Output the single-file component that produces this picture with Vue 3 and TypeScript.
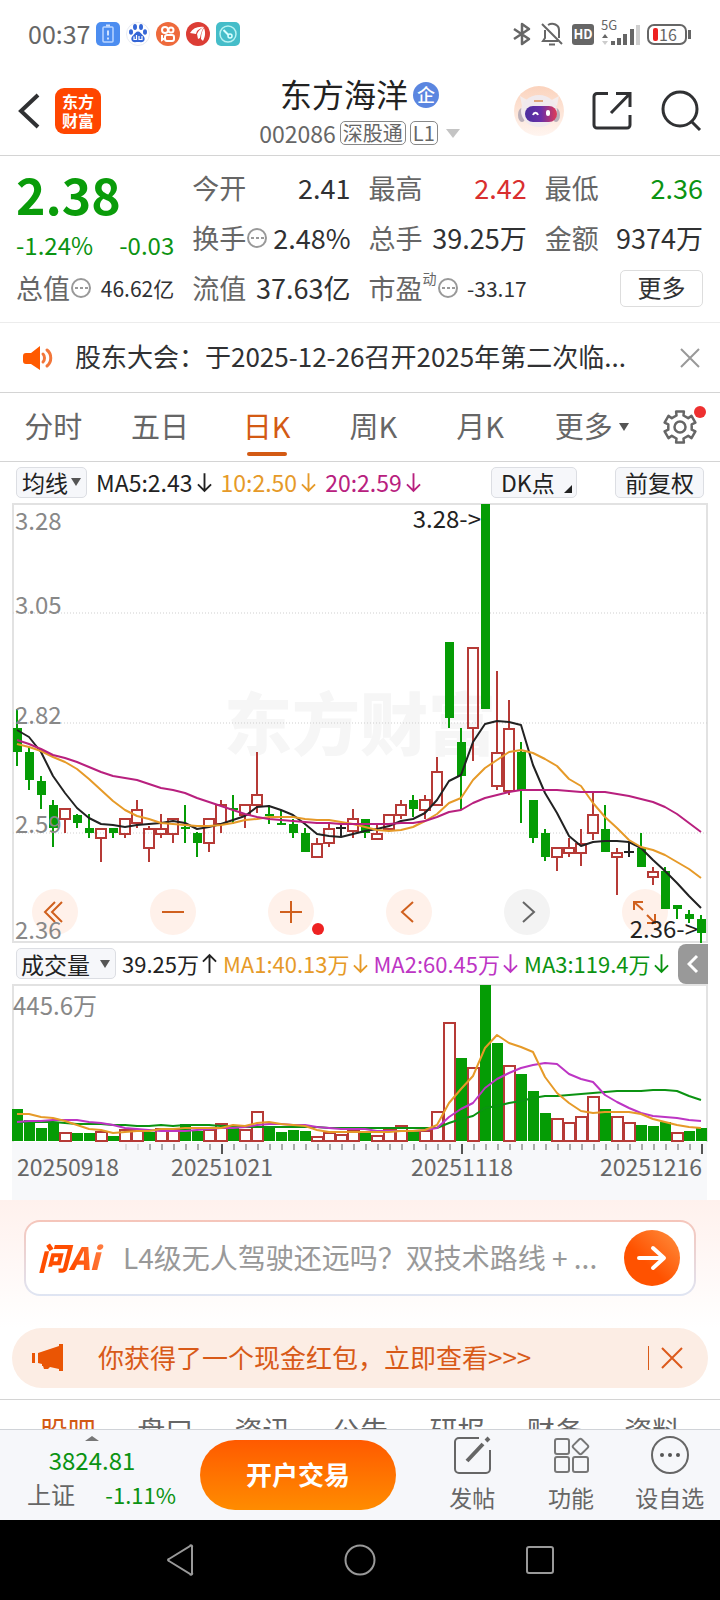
<script setup lang="ts">
import { ref } from 'vue'

type Tone = 'up' | 'down' | 'flat'

interface Candle {
  tone: Tone
  high: number
  top: number
  bottom: number
  low: number
}

const STEP = 12
const START = 17
const VOLUME_BASE = 1141

const centre = (i: number): number => START + i * STEP

// Each row: tone, high, body top, body bottom, low (chart units)
const rows: [string, number, number, number, number][] = [
  ['g', 709, 728, 752, 766], ['g', 747, 752, 780, 790], ['g', 776, 781, 795, 809],
  ['g', 800, 805, 828, 847], ['r', 808, 808, 819, 833], ['g', 814, 815, 823, 828],
  ['g', 814, 828, 833, 838], ['r', 828, 828, 838, 862], ['g', 828, 828, 833, 838],
  ['r', 818, 818, 834, 838], ['r', 800, 809, 823, 828], ['r', 826, 828, 848, 862],
  ['r', 814, 828, 834, 838], ['r', 818, 818, 834, 843], ['g', 805, 827, 829, 843],
  ['g', 832, 833, 843, 857], ['r', 818, 818, 843, 852], ['r', 800, 804, 824, 833],
  ['g', 795, 808, 810, 824], ['r', 804, 804, 815, 828], ['r', 752, 794, 805, 813],
  ['g', 805, 814, 816, 824], ['g', 810, 823, 825, 825], ['g', 819, 824, 833, 838],
  ['g', 828, 833, 852, 852], ['r', 838, 843, 857, 857], ['r', 823, 828, 843, 847],
  ['k', 823, 827, 829, 837], ['r', 809, 818, 831, 838], ['g', 819, 819, 833, 838],
  ['r', 825, 833, 839, 839], ['r', 814, 814, 829, 832], ['r', 800, 804, 815, 819],
  ['g', 795, 800, 809, 817], ['r', 795, 799, 810, 819], ['r', 757, 771, 805, 805],
  ['g', 642, 642, 718, 728], ['g', 728, 742, 776, 809], ['r', 647, 647, 728, 761],
  ['g', 504, 504, 709, 709], ['r', 671, 752, 786, 790], ['r', 700, 728, 791, 795],
  ['g', 742, 752, 790, 823], ['g', 800, 800, 838, 843], ['g', 829, 833, 857, 861],
  ['r', 847, 847, 857, 871], ['r', 838, 847, 853, 857], ['r', 829, 843, 853, 866],
  ['r', 791, 814, 833, 840], ['g', 805, 829, 852, 852], ['r', 848, 852, 857, 895],
  ['k', 843, 851, 853, 857], ['g', 833, 848, 867, 867], ['r', 867, 871, 877, 885],
  ['g', 867, 871, 909, 909], ['g', 905, 905, 909, 919], ['g', 910, 914, 919, 923],
  ['g', 915, 919, 933, 943],
]

const tones: Record<string, Tone> = { g: 'down', r: 'up', k: 'flat' }
const candles: Candle[] = rows.map(([t, high, top, bottom, low]) => ({ tone: tones[t], high, top, bottom, low }))

const ma5 = [
  730, 737, 752, 776, 793, 808, 818, 824, 825, 827, 825, 824, 823, 821, 823, 829, 827, 824, 820, 816,
  807, 806, 810, 815, 824, 834, 836, 837, 834, 831, 829, 826, 821, 819, 813, 800, 781, 775, 742, 724,
  721, 722, 725, 765, 793, 813, 836, 846, 842, 841, 841, 842, 848, 860, 871, 883, 896, 908,
]
const ma10 = [
  744, 747, 751, 757, 762, 769, 779, 790, 801, 810, 816, 819, 823, 824, 825, 826, 826, 825, 823, 820,
  819, 817, 817, 817, 819, 820, 820, 822, 824, 827, 830, 831, 830, 827, 821, 814, 803, 798, 780, 768,
  760, 752, 750, 753, 759, 766, 779, 786, 803, 817, 828, 840, 847, 850, 855, 862, 869, 878,
]
const ma20 = [
  740, 744, 749, 755, 758, 762, 767, 772, 776, 778, 780, 784, 788, 790, 793, 798, 802, 806, 810, 814,
  817, 819, 820, 821, 822, 823, 823, 824, 824, 824, 824, 824, 823, 823, 821, 817, 812, 810, 803, 798,
  795, 792, 790, 790, 790, 790, 791, 792, 792, 792, 794, 796, 799, 802, 807, 814, 823, 832,
]

const volumeTops = [
  1109, 1120, 1128, 1123, 1132, 1133, 1133, 1131, 1136, 1129, 1129, 1132, 1128, 1129, 1124, 1131, 1129, 1123, 1127, 1129,
  1111, 1127, 1132, 1130, 1131, 1136, 1132, 1134, 1130, 1132, 1135, 1129, 1125, 1131, 1130, 1111, 1022, 1058, 1067, 985,
  1043, 1065, 1074, 1091, 1113, 1118, 1122, 1116, 1096, 1109, 1116, 1122, 1125, 1126, 1122, 1132, 1131, 1128,
]
const volumeTones = 'ggggrggrgrrgrrggrrgrrggggrrrrgrrrgrrrgrggrgggrrrrgrrgggrgg'.split('').map((t) => tones[t])

const vol5 = [
  1114, 1114, 1117, 1118, 1121, 1125, 1129, 1130, 1133, 1132, 1131, 1131, 1129, 1129, 1128, 1128, 1128, 1128, 1125, 1126,
  1123, 1122, 1124, 1125, 1126, 1130, 1132, 1132, 1132, 1132, 1132, 1132, 1131, 1131, 1130, 1125, 1103, 1089, 1076, 1048,
  1035, 1043, 1047, 1052, 1077, 1093, 1103, 1111, 1113, 1112, 1112, 1112, 1114, 1119, 1122, 1125, 1127, 1128,
]
const vol10 = [
  1122, 1121, 1121, 1120, 1120, 1120, 1122, 1123, 1125, 1128, 1129, 1130, 1131, 1131, 1131, 1130, 1129, 1128, 1128, 1127,
  1125, 1124, 1124, 1125, 1125, 1127, 1128, 1129, 1129, 1129, 1131, 1131, 1131, 1131, 1130, 1128, 1117, 1109, 1103, 1088,
  1079, 1073, 1068, 1065, 1063, 1064, 1074, 1079, 1082, 1095, 1102, 1108, 1113, 1116, 1117, 1118, 1120, 1121,
]
const vol20 = [
  1122, 1122, 1122, 1122, 1123, 1124, 1124, 1124, 1125, 1125, 1126, 1126, 1125, 1126, 1125, 1125, 1125, 1126, 1126, 1127,
  1127, 1127, 1127, 1127, 1127, 1127, 1128, 1128, 1128, 1128, 1128, 1128, 1128, 1128, 1128, 1128, 1123, 1119, 1116, 1108,
  1106, 1103, 1101, 1098, 1096, 1096, 1095, 1094, 1093, 1092, 1091, 1091, 1091, 1090, 1090, 1091, 1096, 1100,
]

const polyline = (ys: number[]): string => ys.map((y, i) => `${centre(i)},${y}`).join(' ')

const ticks = Array.from({ length: 49 }, (_, i) => {
  const x = 126 + i * STEP
  return { x, major: x === 222 || x === 462 || x === 702, faint: i < 2 }
})

const gear = (() => {
  const points: string[] = []
  for (let k = 0; k < 6; k++) {
    const mid = k * 60 - 90
    const shape: [number, number][] = [[-17, 12], [-14, 16], [14, 16], [17, 12]]
    for (const [offset, radius] of shape) {
      const a = ((mid + offset) * Math.PI) / 180
      points.push(`${(18 + radius * Math.cos(a)).toFixed(1)},${(18 + radius * Math.sin(a)).toFixed(1)}`)
    }
  }
  return points.join(' ')
})()

const periods = ['分时', '五日', '日K', '周K', '月K', '更多']
const period = ref('日K')

const averages = [
  { text: 'MA5:2.43', tone: 'ink' },
  { text: '10:2.50', tone: 'amber' },
  { text: '20:2.59', tone: 'magenta' },
]
const volumeAverages = [
  { text: 'MA1:40.13万', tone: 'amber' },
  { text: 'MA2:60.45万', tone: 'violet' },
  { text: 'MA3:119.4万', tone: 'green' },
]
const sections = ['股吧', '盘口', '资讯', '公告', '研报', '财务', '资料']
const question = ref('')
</script>

<template>
  <div class="page">
    <div class="status">
      <span class="clock">00:37</span>
      <svg class="app" viewBox="0 0 24 24" aria-hidden="true">
        <rect width="24" height="24" rx="5" fill="#4c8df0" />
        <rect x="7" y="5" width="10" height="15" rx="1" fill="none" stroke="#b9d5ff" stroke-width="1.5" />
        <path d="M10 3.500h4M12 8.500v5M12 15.500v2" stroke="#cfe2ff" stroke-width="2" />
      </svg>
      <svg class="app" viewBox="0 0 24 24" aria-hidden="true">
        <circle cx="12" cy="12" r="11.500" fill="#fff" stroke="#e8ebf2" stroke-width="1" />
        <g fill="#3566d6">
          <ellipse cx="9" cy="5" rx="2" ry="3" /><ellipse cx="15" cy="5" rx="2" ry="3" />
          <ellipse cx="5" cy="10" rx="2" ry="2.800" /><ellipse cx="19" cy="10" rx="2" ry="2.800" />
          <path d="M12 9.500c2 0 3 2 4.500 3.500 2 1.800 2.500 3 2 5-1 3-4 2-6.500 2s-5.500 1-6.500-2c-.5-2 0-3.200 2-5C9 11.500 10 9.500 12 9.500z" />
        </g>
        <path d="M8 14.500v3h2.500v-4.500M13 14v3.500h3V14" fill="none" stroke="#fff" stroke-width="1.200" />
      </svg>
      <svg class="app" viewBox="0 0 24 24" aria-hidden="true">
        <circle cx="12" cy="12" r="12" fill="#ee6a3c" />
        <g fill="none" stroke="#fff" stroke-width="2">
          <circle cx="9" cy="8" r="3" /><circle cx="15" cy="8" r="2.500" />
          <rect x="9" y="13" width="9" height="6" rx="2" /><path d="M6 13v5l3-2" />
        </g>
      </svg>
      <svg class="app" viewBox="0 0 24 24" aria-hidden="true">
        <circle cx="12" cy="12" r="12" fill="#dc3d35" />
        <path d="M4 11c3-5 8-7 14-6-3 1-5 2-7 4l-1 3zM11 12c2-4 4-6 7-7-2 3-3 6-4 11l-2 1zM15 17c0-5 1-8 3-11 2 5 1 9-1 13z" fill="#fff" />
      </svg>
      <svg class="app" viewBox="0 0 24 24" aria-hidden="true">
        <rect width="24" height="24" rx="5" fill="#45bdc9" />
        <circle cx="12" cy="12" r="8" fill="none" stroke="#b9f2f2" stroke-width="1.500" />
        <circle cx="14" cy="14" r="2" fill="none" stroke="#d9ffff" stroke-width="1.500" />
        <path d="M7.500 8l5 5" stroke="#d9ffff" stroke-width="2" />
      </svg>
      <span class="grow"></span>
      <svg class="sys bt" viewBox="0 0 20 24" aria-hidden="true">
        <path d="M2 7l15 10-7 5V2l7 5L2 17" fill="none" stroke="#666" stroke-width="2.500" stroke-linejoin="round" />
      </svg>
      <svg class="sys bell" viewBox="0 0 24 24" aria-hidden="true">
        <path d="M5 8v8l-2 3h15M8 3c5-3 11 0 11 5v8M2 2l20 20" fill="none" stroke="#666" stroke-width="2" />
        <path d="M9 22.500h6" stroke="#666" stroke-width="2" />
      </svg>
      <span class="hd">HD</span>
      <span class="signal">
        <svg viewBox="0 0 40 26" aria-hidden="true">
          <path d="M4 13l3 4H1z" fill="#666" /><path d="M7 20H1l3 4z" fill="#ccc" />
          <g fill="#666"><rect x="10" y="20" width="4" height="4" /><rect x="16" y="17" width="4" height="7" /><rect x="22" y="13" width="4" height="11" /><rect x="29" y="8" width="4" height="16" /></g>
          <rect x="35" y="4" width="4" height="20" fill="#cfcfcf" />
        </svg>
        <span class="gen">5G</span>
      </span>
      <span class="battery"><i></i>16</span>
    </div>

    <header class="head">
      <div class="side">
        <button class="plain" aria-label="返回">
          <svg width="24" height="38" viewBox="0 0 24 38"><path d="M21 3L4 19l17 16" fill="none" stroke="#303133" stroke-width="4" /></svg>
        </button>
        <a class="brand" href="#"><span>东方</span><span>财富</span></a>
      </div>
      <div class="title">
        <h1>东方海洋<span class="corp">企</span></h1>
        <p>002086<span class="tag">深股通</span><span class="tag">L1</span><i class="caret pale"></i></p>
      </div>
      <div class="side tools">
        <button class="plain" aria-label="智能助手">
          <svg width="50" height="50" viewBox="0 0 50 50">
            <defs>
              <linearGradient id="halo" x1="0" y1="0" x2="0" y2="1"><stop offset="0" stop-color="#fbd3bd" /><stop offset="1" stop-color="#fff5f0" /></linearGradient>
              <linearGradient id="visor" x1="0" y1="0" x2="1" y2="0"><stop offset="0" stop-color="#4a2f9e" /><stop offset=".5" stop-color="#6a2fa8" /><stop offset="1" stop-color="#e03a55" /></linearGradient>
            </defs>
            <circle cx="25" cy="25" r="25" fill="url(#halo)" />
            <path d="M6 10l9 5-7 5zM45 10l-9 5 7 5z" fill="#f4ecec" />
            <ellipse cx="8" cy="29" rx="4" ry="7" fill="#b9aeb8" /><ellipse cx="42" cy="29" rx="4" ry="7" fill="#b9aeb8" />
            <ellipse cx="25" cy="25" rx="18" ry="16" fill="#f1eaed" />
            <path d="M20 15h9" stroke="#e0a67c" stroke-width="2" />
            <rect x="11" y="20" width="32" height="16" rx="8" fill="url(#visor)" />
            <path d="M19 29c1-3 4-3 5 0" fill="none" stroke="#fff" stroke-width="2" />
            <rect x="32" y="24" width="4" height="6" rx="2" fill="#fff" />
          </svg>
        </button>
        <button class="plain" aria-label="分享">
          <svg width="40" height="40" viewBox="0 0 40 40" fill="none" stroke="#303133" stroke-width="3">
            <path d="M16 2.500H5a3 3 0 0 0-3 3V34a3 3 0 0 0 3 3h30a3 3 0 0 0 3-3V24M24 2.500h14V16M38 2.500L19 22" />
          </svg>
        </button>
        <button class="plain" aria-label="搜索">
          <svg width="42" height="42" viewBox="0 0 42 42" fill="none" stroke="#303133" stroke-width="3">
            <circle cx="20" cy="19" r="17" /><path d="M31 31l9 9" />
          </svg>
        </button>
      </div>
    </header>

    <main class="body">
      <section class="quote">
        <div class="price">
          <strong>2.38</strong>
          <div class="change"><span>-1.24%</span><span>-0.03</span></div>
        </div>
        <div class="cell"><span class="k">今开</span><b>2.41</b></div>
        <div class="cell"><span class="k">最高</span><b class="red">2.42</b></div>
        <div class="cell"><span class="k">最低</span><b class="green">2.36</b></div>
        <div class="cell">
          <span class="k">换手<svg class="info" viewBox="0 0 20 20"><circle cx="10" cy="10" r="9" /><path d="M4 10h3M9 10h3M14 10h3" /></svg></span><b>2.48%</b>
        </div>
        <div class="cell"><span class="k">总手</span><b>39.25万</b></div>
        <div class="cell"><span class="k">金额</span><b>9374万</b></div>
        <div class="cell">
          <span class="k">总值<svg class="info" viewBox="0 0 20 20"><circle cx="10" cy="10" r="9" /><path d="M4 10h3M9 10h3M14 10h3" /></svg></span><b class="small">46.62亿</b>
        </div>
        <div class="cell"><span class="k">流值</span><b>37.63亿</b></div>
        <div class="cell">
          <span class="k">市盈<sup>动</sup><svg class="info" viewBox="0 0 20 20"><circle cx="10" cy="10" r="9" /><path d="M4 10h3M9 10h3M14 10h3" /></svg></span><b class="small">-33.17</b>
        </div>
        <div class="cell end"><button class="more">更多</button></div>
      </section>

      <section class="notice">
        <svg width="32" height="26" viewBox="0 0 32 26" aria-hidden="true">
          <path d="M4 8h5l9-7v24l-9-6H4a3 3 0 0 1-3-3v-5a3 3 0 0 1 3-3z" fill="#ff5a00" />
          <path d="M21 9c2 2 2 6 0 8M25 5c5 4 5 12 0 16" fill="none" stroke="#f2763a" stroke-width="3" stroke-linecap="round" />
        </svg>
        <a href="#">股东大会：于2025-12-26召开2025年第二次临...</a>
        <button class="plain" aria-label="关闭公告">
          <svg width="20" height="20" viewBox="0 0 20 20"><path d="M1 1l18 18M19 1L1 19" stroke="#999" stroke-width="2" /></svg>
        </button>
      </section>

      <nav class="periods">
        <button v-for="p in periods" :key="p" :class="{ on: p === period, drop: p === '更多' }" @click="period = p">
          <span>{{ p }}</span><i v-if="p === '更多'" class="caret"></i>
        </button>
        <button class="setting" aria-label="设置">
          <svg width="36" height="36" viewBox="0 0 36 36" fill="none" stroke="#666" stroke-width="2.500" stroke-linejoin="round">
            <polygon :points="gear" /><circle cx="18" cy="18" r="5.500" />
          </svg>
          <i class="dot"></i>
        </button>
      </nav>

      <div class="legend averages">
        <button class="chip">均线<i class="caret"></i></button>
        <span v-for="a in averages" :key="a.text" class="avg" :class="a.tone"><span>{{ a.text }}</span><svg class="arrow" viewBox="0 0 16 22"><path d="M8 1v19M1 13l7 7 7-7" /></svg></span>
        <span class="grow"></span>
        <button class="chip dk">DK点<i class="corner"></i></button>
        <button class="chip adjust">前复权</button>
      </div>

      <section class="chart">
        <div class="controls">
          <button aria-label="最早"><svg viewBox="0 0 46 46"><path d="M23 13L13 23l10 10M30 13L20 23l10 10" /></svg></button>
          <button aria-label="缩小"><svg viewBox="0 0 46 46"><path d="M12 23h22" /></svg></button>
          <button aria-label="放大"><svg viewBox="0 0 46 46"><path d="M12 23h22M23 12v22" /></svg><i class="dot"></i></button>
          <button aria-label="向左"><svg viewBox="0 0 46 46"><path d="M27 13L16 23l11 10" /></svg></button>
          <button class="grey" aria-label="向右"><svg viewBox="0 0 46 46"><path d="M19 13l11 10-11 10" /></svg></button>
          <button aria-label="全屏"><svg viewBox="0 0 46 46"><path d="M12 21v-8h9M12 13l9 8M25 26l8 8M33 25v9h-8" /></svg></button>
        </div>
        <svg class="plot" viewBox="12 503 696 440" role="img" aria-label="日K线图">
          <text class="watermark" x="224" y="750">东方财富</text>
          <path d="M13 943V504H707V942H13" fill="none" stroke="#e2e2e2" stroke-width="2" />
          <path d="M13 613H707M13 723H707M13 833H707" stroke="#cfcfcf" stroke-dasharray="1 2" />
          <g v-for="(c, i) in candles" :key="i" :class="c.tone">
            <path :d="`M${centre(i)} ${c.high}V${c.top}M${centre(i)} ${c.bottom}V${c.low}`" />
            <rect v-if="c.tone === 'up'" :x="centre(i) - 5" :y="c.top + 1" width="10" :height="c.bottom - c.top - 1" />
            <rect v-else-if="c.tone === 'down'" :x="centre(i) - 4" :y="c.top" width="9" :height="c.bottom - c.top" />
            <path v-else :d="`M${centre(i) - 5} ${c.top + 1}h10M${centre(i)} ${c.top}v2`" />
          </g>
          <polyline class="line black" :points="polyline(ma5)" />
          <polyline class="line amber" :points="polyline(ma10)" />
          <polyline class="line magenta" :points="polyline(ma20)" />
          <g class="scale">
            <text x="15" y="530">3.28</text><text x="15" y="614">3.05</text><text x="15" y="724">2.82</text>
            <text x="15" y="833">2.59</text><text x="15" y="939">2.36</text>
          </g>
          <g class="mark">
            <text x="481" y="528">3.28-&gt;</text>
            <text x="698" y="938">2.36-&gt;</text>
          </g>
        </svg>
      </section>

      <div class="legend volume">
        <button class="chip wide">成交量<i class="caret"></i></button>
        <span class="avg"><span>39.25万</span><svg class="arrow" viewBox="0 0 16 22"><path d="M8 21V2M1 9l7-7 7 7" /></svg></span>
        <span v-for="a in volumeAverages" :key="a.text" class="avg" :class="a.tone"><span>{{ a.text }}</span><svg class="arrow" viewBox="0 0 16 22"><path d="M8 1v19M1 13l7 7 7-7" /></svg></span>
        <span class="grow"></span>
        <button class="drawer" aria-label="展开侧栏"><svg width="12" height="20" viewBox="0 0 12 20"><path d="M10 2L2 10l8 8" fill="none" stroke="#fff" stroke-width="3" /></svg></button>
      </div>

      <section class="chart">
        <svg class="plot" viewBox="12 984 696 216" role="img" aria-label="成交量">
          <rect x="12" y="1142" width="695" height="58" fill="#f7f8fa" />
          <path d="M13 1142V985H707V1142" fill="none" stroke="#e2e2e2" stroke-width="2" />
          <g v-for="(top, i) in volumeTops" :key="i" :class="volumeTones[i]">
            <rect v-if="volumeTones[i] === 'up'" :x="centre(i) - 5" :y="top + 1" width="11" :height="VOLUME_BASE - top - 1" />
            <rect v-else :x="centre(i) - 5" :y="top" width="11" :height="VOLUME_BASE - top" />
          </g>
          <polyline class="line green" :points="polyline(vol20)" />
          <polyline class="line violet" :points="polyline(vol10)" />
          <polyline class="line amber" :points="polyline(vol5)" />
          <g class="scale"><text x="13" y="1015">445.6万</text></g>
          <rect
            v-for="t in ticks" :key="t.x" :x="t.x - 1" y="1144" width="2"
            :height="t.major ? 10 : 6" :fill="t.major ? '#555' : t.faint ? '#ddd' : '#aaa'"
          />
          <g class="dates">
            <text x="17" y="1176">20250918</text><text x="222" y="1176" text-anchor="middle">20251021</text>
            <text x="462" y="1176" text-anchor="middle">20251118</text><text x="702" y="1176" text-anchor="end">20251216</text>
          </g>
        </svg>
      </section>

      <section class="ask">
        <form class="box" @submit.prevent>
          <label for="question">问Ai</label>
          <input id="question" v-model="question" type="text" placeholder="L4级无人驾驶还远吗？双技术路线 + ..." />
          <button aria-label="提问">
            <svg width="30" height="26" viewBox="0 0 30 26"><path d="M2 13h24M16 3l11 10-11 10" fill="none" stroke="#fff" stroke-width="4" stroke-linecap="round" stroke-linejoin="round" /></svg>
          </button>
        </form>
      </section>

      <aside class="banner">
        <svg width="32" height="28" viewBox="0 0 32 28" aria-hidden="true"><path d="M0 9h3v10H0zM6 9l21-7V0h4v27h-4v-2l-9-2-2 2h-4l-1-3H10V20l-4-1z" fill="#ea5504" /></svg>
        <a href="#">你获得了一个现金红包，立即查看&gt;&gt;&gt;</a>
        <i class="bar"></i>
        <button class="plain" aria-label="关闭红包提示">
          <svg width="22" height="22" viewBox="0 0 22 22"><path d="M1 1l20 20M21 1L1 21" stroke="#dc5a1c" stroke-width="2" /></svg>
        </button>
      </aside>

      <nav class="sections">
        <a v-for="(s, i) in sections" :key="s" href="#" :class="{ on: i === 0 }">{{ s }}</a>
      </nav>
    </main>

    <footer class="dock">
      <a class="index" href="#">
        <i class="peak"></i>
        <span class="point">3824.81</span>
        <span class="pair"><span>上证</span><em>-1.11%</em></span>
      </a>
      <button class="trade">开户交易</button>
      <div class="actions">
        <button>
          <svg width="38" height="38" viewBox="0 0 38 38" fill="none" stroke="#666" stroke-width="2">
            <path d="M26 2H6a4 4 0 0 0-4 4v27a4 4 0 0 0 4 4h27a4 4 0 0 0 4-4V14" /><path d="M14 25L30 8M33 5l3-3" stroke-width="4" />
          </svg>
          发帖
        </button>
        <button>
          <svg width="38" height="38" viewBox="0 0 38 38" fill="none" stroke="#777" stroke-width="2">
            <rect x="3" y="3" width="14" height="15" rx="2" /><rect x="3" y="21" width="14" height="15" rx="2" />
            <rect x="21" y="21" width="15" height="15" rx="2" /><rect x="22.500" y="4.500" width="12" height="12" rx="2" transform="rotate(45 28.500 10.500)" />
          </svg>
          功能
        </button>
        <button>
          <svg width="38" height="38" viewBox="0 0 38 38">
            <circle cx="19" cy="19" r="18" fill="none" stroke="#666" stroke-width="2" />
            <g fill="#555"><circle cx="11" cy="19" r="2" /><circle cx="19" cy="19" r="2" /><circle cx="27" cy="19" r="2" /></g>
          </svg>
          设自选
        </button>
      </div>
    </footer>

    <div class="system">
      <button aria-label="返回键"><svg width="30" height="32" viewBox="0 0 30 32"><path d="M27 3v26a1 1 0 0 1-2 1L4 17q-2-1 0-2L25 2a1 1 0 0 1 2 1z" /></svg></button>
      <button aria-label="主页键"><svg width="32" height="32" viewBox="0 0 32 32"><circle cx="16" cy="16" r="14.500" /></svg></button>
      <button aria-label="任务键"><svg width="30" height="30" viewBox="0 0 30 30"><rect x="2" y="2" width="26" height="26" rx="2" /></svg></button>
    </div>
  </div>
</template>

<style>
body { margin: 0; background: #fff; }
</style>

<style scoped>
.page {
  display: flex;
  flex-direction: column;
  height: 100vh;
  overflow: hidden;
  background: #fff;
  color: #303133;
  font-family: "Noto Sans CJK SC", "Noto Sans", sans-serif;
  font-size: 24px;
  line-height: 32px;
}
.page * { box-sizing: border-box; }
button, input { font: inherit; color: inherit; margin: 0; padding: 0; border: 0; background: none; }
button { cursor: pointer; }
a { color: inherit; text-decoration: none; }
svg { display: block; flex: none; }
.plain { display: flex; }
.grow { flex: 1; }
.red { color: #d92f2f; }
.green { color: #0b9312; }
.amber { color: #e69a28; }
.magenta { color: #b8207e; }
.violet { color: #bd35c4; }

.status { display: flex; align-items: center; flex: none; height: 68px; padding: 0 29px 0 28px; color: #666; }
.clock { margin-right: 6px; padding-bottom: 2px; font-size: 25px; }
.app { width: 24px; height: 24px; margin-right: 6px; }
.sys { height: 24px; }
.bt { width: 20px; }
.bell { width: 24px; margin-left: 8px; }
.hd { margin-left: 8px; width: 22px; height: 21px; border-radius: 3px; background: #666; color: #fff; font-size: 13px; font-weight: 700; line-height: 20px; text-align: center; }
.signal { position: relative; width: 40px; height: 26px; margin-left: 7px; }
.gen { position: absolute; left: 0; top: -3px; font-size: 13px; line-height: 14px; }
.battery { position: relative; display: flex; align-items: center; width: 40px; height: 21px; margin: 0 4px 0 6px; padding-left: 4px; border: 2px solid #666; border-radius: 7px; font-size: 16px; line-height: 17px; }
.battery i { width: 5px; height: 13px; margin-right: 1px; border-radius: 2px; background: #ee2222; }
.battery::after { content: ""; position: absolute; right: -6px; top: 4px; width: 3px; height: 9px; background: #666; }

.head { display: grid; grid-template-columns: 1fr auto 1fr; flex: none; height: 88px; padding: 0 18px 0 17px; border-bottom: 1px solid #d4d4d4; }
.side { display: flex; align-items: center; gap: 14px; padding-bottom: 1px; }
.tools { justify-content: flex-end; gap: 28px; }
.brand { display: flex; flex-direction: column; justify-content: center; width: 46px; height: 46px; padding-bottom: 1px; border-radius: 9px; background: #ff4600; color: #fff; font-size: 16px; font-weight: 700; line-height: 19px; text-align: center; }
.title { display: flex; flex-direction: column; align-items: center; padding-top: 5px; color: #666; }
h1 { display: flex; align-items: center; gap: 5px; margin: 0; color: #222; font-size: 32px; font-weight: 400; line-height: 40px; }
.corp { width: 26px; height: 26px; margin-top: 3px; border-radius: 13px; background: #5b86e0; color: #fff; font-size: 18px; font-weight: 500; line-height: 25px; text-align: center; }
.title p { display: flex; align-items: center; gap: 4px; margin: 3px 0 0; font-size: 23px; line-height: 34px; }
.tag { padding: 0 2px; border: 1px solid #888; border-radius: 5px; font-size: 20px; line-height: 22px; }
.caret { width: 0; height: 0; border: 5px solid transparent; border-top: 8px solid #555; border-bottom: 0; }
.caret.pale { margin-left: 4px; border-width: 9px 7px 0; border-top-color: #c4c4c4; }

.body { flex: 1; min-height: 0; overflow: hidden; }
.quote { display: grid; grid-template-columns: repeat(4, 1fr); grid-auto-rows: 50px; column-gap: 18px; height: 167px; padding: 7px 17px 0 16px; border-bottom: 1px solid #ececec; }
.price { grid-row: span 2; color: #0a9c0a; }
.price strong { display: block; font-size: 50px; font-weight: 700; line-height: 60px; }
.change { display: flex; justify-content: space-between; margin-top: 6px; color: #0b9312; }
.cell { display: flex; align-items: center; justify-content: space-between; }
.cell b { font-size: 27px; font-weight: 400; white-space: nowrap; }
.cell b.small { font-size: 21px; }
.k { position: relative; display: flex; align-items: center; color: #666; font-size: 27px; white-space: nowrap; }
.k sup { align-self: flex-start; font-size: 14px; line-height: 12px; }
.info { width: 20px; height: 20px; margin-left: 1px; fill: none; stroke: #999; stroke-width: 2; }
.cell.end { justify-content: flex-end; }
.more { width: 83px; height: 37px; padding-bottom: 2px; border: 1px solid #ddd; border-radius: 5px; }

.notice { display: flex; align-items: center; gap: 21px; height: 70px; padding: 0 20px 0 22px; border-bottom: 1px solid #d4d4d4; font-size: 26px; }
.notice a { flex: 1; padding-bottom: 3px; white-space: nowrap; }

.periods { display: grid; grid-template-columns: repeat(6, 1fr) 80px; height: 69px; border-bottom: 1px solid #d4d4d4; color: #666; font-size: 29px; }
.periods button { position: relative; display: flex; align-items: center; justify-content: center; gap: 6px; }
.periods span { padding-bottom: 4px; }
.periods .drop { padding-left: 10px; }
.periods .on { color: #d35a14; }
.periods .on::after { content: ""; position: absolute; bottom: 5px; left: calc(50% - 20px); width: 40px; height: 4px; border-radius: 2px; background: #d35a14; }
.dot { position: absolute; width: 12px; height: 12px; border-radius: 6px; background: #ee3030; }
.setting .dot { right: 14px; top: 13px; }

.legend { display: flex; align-items: center; height: 41px; padding: 0 16px; color: #222; font-size: 23px; white-space: nowrap; }
.chip { position: relative; display: flex; align-items: center; height: 31px; padding: 0 5px 1px; border: 1px solid #dcdee3; border-radius: 5px; background: #f6f7fa; font-size: 23px; line-height: 28px; }
.chip .caret { margin-left: 3px; }
.chip.wide { padding: 0 5px 0 4px; }
.chip.wide .caret { margin-left: 10px; }
.chip.adjust { padding: 0 9px 1px; }
.avg { display: flex; align-items: center; gap: 4px; margin-left: 9px; }
.avg span { padding-bottom: 2px; }
.arrow { width: 15px; height: 21px; fill: none; stroke: currentColor; stroke-width: 2; }
.dk { width: 86px; margin-right: 38px; padding-left: 9px; }
.corner { position: absolute; right: 4px; bottom: 4px; border: 4px solid #222; border-top-color: transparent; border-left-color: transparent; }
.volume { padding-right: 12px; font-size: 22px; }
.volume .avg { gap: 3px; margin-left: 6px; }
.drawer { display: flex; align-items: center; justify-content: center; width: 30px; height: 40px; border-radius: 8px 0 0 8px; background: #999; }

.chart { position: relative; margin: 0 12px; }
.plot { position: relative; width: 100%; height: auto; pointer-events: none; }
.up { fill: none; stroke: #b63a36; stroke-width: 2; }
.down { fill: #059c05; stroke: #059c05; }
.down path { stroke-width: 2; }
.down rect { stroke-width: 0; }
.flat { fill: none; stroke: #222; stroke-width: 2; }
.line { fill: none; stroke: currentColor; stroke-width: 2; stroke-linejoin: round; }
.line.black { color: #222; }
.scale { fill: #888; font-size: 24px; }
.dates { fill: #666; font-size: 23px; }
.mark { fill: #222; font-size: 24px; text-anchor: end; }
.watermark { fill: #f6f6f6; font-size: 68px; font-weight: 900; }
.controls { position: absolute; left: 20px; right: 40px; bottom: 8px; display: flex; justify-content: space-between; }
.controls button { position: relative; width: 46px; height: 46px; border-radius: 23px; background: #fff1ea; }
.controls svg { width: 46px; height: 46px; fill: none; stroke: #d0601e; stroke-width: 2; }
.controls .grey { background: #f3f3f3; }
.controls .grey svg { stroke: #666; }
.controls .dot { right: -10px; bottom: 0; background: #ee2222; }

.ask { padding: 20px 24px 32px; background: linear-gradient(#fff1ed, #fff); }
.box { display: flex; align-items: center; height: 76px; padding: 0 14px 0 12px; border: 2px solid transparent; border-radius: 16px; background: linear-gradient(#fff, #fff) padding-box, linear-gradient(#f5c5ba, #dfe5f3) border-box; }
.box label { flex: none; width: 85px; padding-bottom: 2px; background: linear-gradient(75deg, #ff4d00 40%, #ff9a68) no-repeat; background-clip: text; -webkit-background-clip: text; color: transparent; font-size: 31px; font-style: italic; font-weight: 900; }
.box input { flex: 1; min-width: 0; height: 40px; padding-bottom: 3px; outline: 0; font-size: 28px; }
.box input::placeholder { color: #999; opacity: 1; }
.box button { display: flex; align-items: center; justify-content: center; width: 56px; height: 56px; border-radius: 28px; background: linear-gradient(45deg, #ff5200 40%, #ff9040); }

.banner { display: flex; align-items: center; height: 60px; margin: 0 12px 11px; padding: 0 25px 0 20px; border-radius: 30px; background: #fcede4; color: #d85a18; font-size: 26px; }
.banner a { flex: 1; margin-left: 34px; padding-bottom: 2px; white-space: nowrap; }
.bar { width: 1px; height: 24px; margin-right: 12px; background: #d85a18; }

.sections { display: grid; grid-template-columns: repeat(7, 1fr); padding: 10px 19px 20px; border-top: 1px solid #d4d4d4; color: #666; font-size: 28px; line-height: 40px; text-align: center; }
.sections .on { color: #d35a14; }

.dock { display: flex; align-items: center; flex: none; height: 91px; padding-right: 1px; border-top: 1px solid #d0d3d8; background: #f6f7fa; color: #666; }
.index { display: flex; flex-direction: column; align-items: center; align-self: stretch; width: 184px; margin-right: 16px; padding-top: 6px; }
.peak { width: 0; height: 0; border: 7px solid transparent; border-top: 0; border-bottom: 5px solid #777; }
.point { margin-top: 3px; color: #0b9312; }
.pair { display: flex; justify-content: space-between; align-self: stretch; margin-top: 2px; padding: 0 8px 0 27px; }
.pair em { color: #0b9312; font-size: 22px; font-style: normal; }
.trade { flex: none; width: 196px; height: 70px; padding-bottom: 3px; border-radius: 35px; background: linear-gradient(#ff5a00, #ff8c00); color: #fff; font-size: 26px; font-weight: 700; }
.actions { display: grid; grid-template-columns: repeat(3, 1fr); flex: 1; padding: 0 0 1px 27px; }
.actions button { display: flex; flex-direction: column; align-items: center; gap: 6px; font-size: 23px; line-height: 34px; white-space: nowrap; }

.system { display: flex; align-items: center; justify-content: center; gap: 148px; flex: none; height: 80px; background: #000; }
.system button { display: flex; justify-content: center; width: 32px; }
.system svg { fill: none; stroke: #999; stroke-width: 2; }
</style>
